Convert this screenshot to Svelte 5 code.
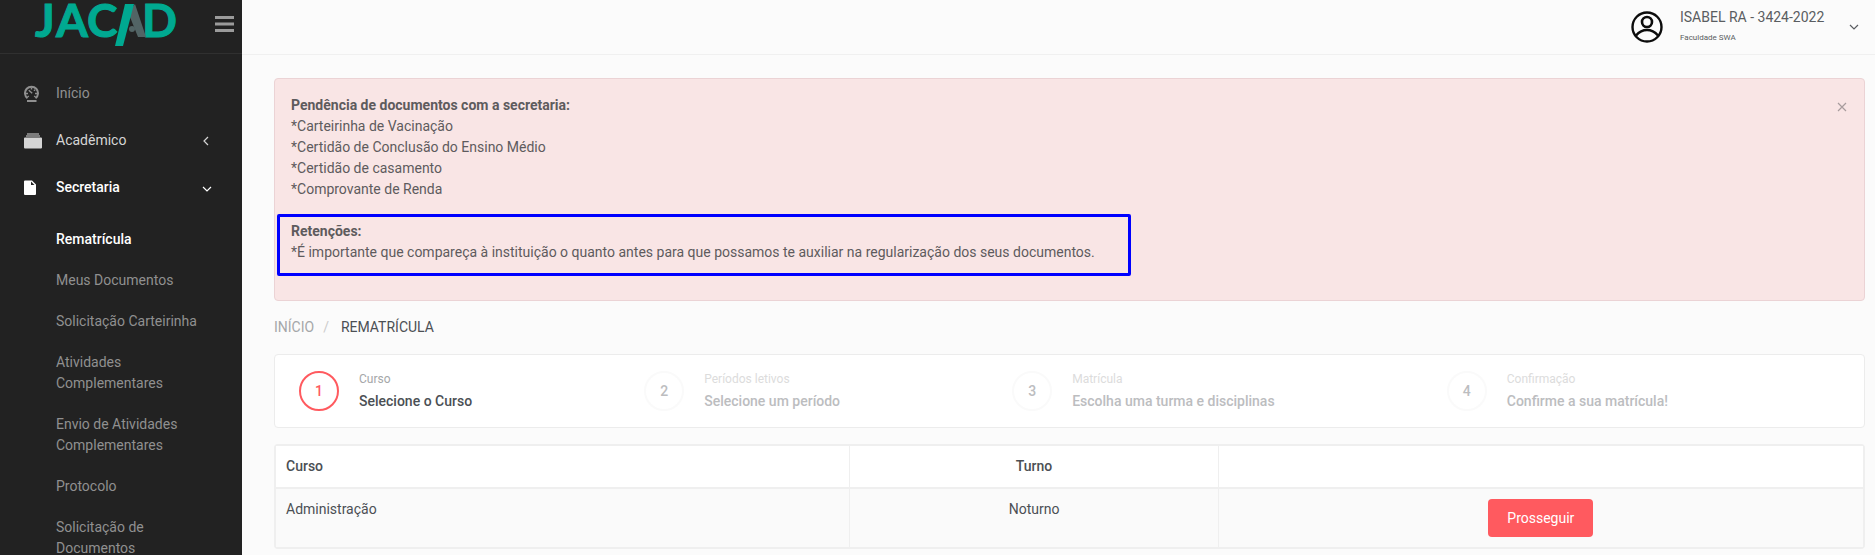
<script>
	const submenu = [
		{ label: "Rematrícula", active: true },
		{ label: "Meus Documentos" },
		{ label: "Solicitação Carteirinha" },
		{ label: "Atividades Complementares" },
		{ label: "Envio de Atividades Complementares" },
		{ label: "Protocolo" },
		{ label: "Solicitação de Documentos" },
	];

	const pendingDocs = [
		"Carteirinha de Vacinação",
		"Certidão de Conclusão do Ensino Médio",
		"Certidão de casamento",
		"Comprovante de Renda",
	];

	const steps = [
		{ title: "Curso", text: "Selecione o Curso" },
		{ title: "Períodos letivos", text: "Selecione um período" },
		{ title: "Matrícula", text: "Escolha uma turma e disciplinas" },
		{ title: "Confirmação", text: "Confirme a sua matrícula!" },
	];

	const courses = [{ name: "Administração", shift: "Noturno" }];

	let currentStep = $state(0);
	let showAlert = $state(true);
	let secretariaOpen = $state(true);

	function nextStep() {
		if (currentStep < steps.length - 1) {
			currentStep += 1;
		}
	}
</script>

<div class="layout">
	<aside class="sidebar">
		<div class="brand">
			<svg class="logo" viewBox="0 0 144 48" role="img" aria-label="JACAD">
				<g class="logo-text">
					<text x="1" y="37">J</text>
					<text x="22" y="37">A</text>
					<text x="53" y="37">C</text>
					<text x="108" y="37">D</text>
				</g>
				<polygon class="logo-leg" points="97,9 101,4 112,37 104,37 96,17" />
				<polygon class="logo-slash" points="91,4 100,4 89,46 81,46" />
				<circle class="logo-leg" cx="98" cy="29" r="3" />
			</svg>
			<button type="button" class="toggle" aria-label="Menu">
				<svg width="20" height="18" viewBox="0 0 20 18">
					<path d="M0 2.500h19M0 9h19M0 15.500h19" stroke="currentColor" stroke-width="3" />
				</svg>
			</button>
		</div>

		<nav class="menu">
			<a href="#inicio" class="menu-item">
				<svg class="menu-icon" viewBox="0 0 18 18">
					<path
						d="M3.500 13.300A6.500 6.500 0 1 1 11.500 13.300"
						fill="none"
						stroke="currentColor"
						stroke-width="2"
					/>
					<path d="M3 15h9.500v2H3z" fill="currentColor" />
					<path
						d="M4.800 5.300l3.400 2.900M7.500 2.500v2M2 8.500h2M11 8.500h2M11 4.800l-1 1M3.500 12l1.300-1M11.500 12l-1.300-1"
						fill="none"
						stroke="currentColor"
						stroke-width="1.500"
					/>
				</svg>
				<span class="menu-label">Início</span>
			</a>
			<a href="#academico" class="menu-item bright">
				<svg class="menu-icon" viewBox="0 0 18 18">
					<path
						d="M3 1.500h12v1H3zM2 3.500h14v1H2zM1 5.500h16a1 1 0 0 1 1 1v9a1 1 0 0 1-1 1H1a1 1 0 0 1-1-1v-9a1 1 0 0 1 1-1z"
						fill="currentColor"
					/>
				</svg>
				<span class="menu-label">Acadêmico</span>
				<svg class="arrow" viewBox="0 0 10 10">
					<path d="M6 1L2 5l4 4" fill="none" stroke="currentColor" stroke-width="1.200" />
				</svg>
			</a>
			<button
				type="button"
				class="menu-item active"
				aria-expanded={secretariaOpen}
				onclick={() => (secretariaOpen = !secretariaOpen)}
			>
				<svg class="menu-icon" viewBox="0 0 18 18">
					<path
						fill-rule="evenodd"
						d="M1 1.500h7l4 4V15a1 1 0 0 1-1 1H1a1 1 0 0 1-1-1V2.500a1 1 0 0 1 1-1zM7 2.500V6h3.500z"
						fill="currentColor"
					/>
				</svg>
				<span class="menu-label">Secretaria</span>
				<svg class="arrow" viewBox="0 0 10 10">
					<path d="M1 4l4 4 4-4" fill="none" stroke="currentColor" stroke-width="1.200" />
				</svg>
			</button>
			{#if secretariaOpen}
				<div class="submenu">
					{#each submenu as item}
						<a href="#secretaria" class="submenu-item" class:active={item.active}>{item.label}</a>
					{/each}
				</div>
			{/if}
		</nav>
	</aside>

	<div class="content">
		<header class="topbar">
			<button type="button" class="user">
				<svg class="avatar" viewBox="0 0 32 32">
					<g fill="none" stroke="#0c0c0c">
						<circle cx="16" cy="16" r="14.500" stroke-width="2.400" />
						<circle cx="16" cy="11" r="5" stroke-width="2.600" />
						<path d="M5 24.500C8.500 20.500 12 19 16 19s7.500 1.500 11 5.500" stroke-width="2.600" />
					</g>
				</svg>
				<span class="user-info">
					<span class="user-name">ISABEL RA - 3424-2022</span>
					<span class="user-school">Faculdade SWA</span>
				</span>
				<svg class="arrow" viewBox="0 0 10 10">
					<path d="M1 3l4 4 4-4" fill="none" stroke="currentColor" stroke-width="1.200" />
				</svg>
			</button>
		</header>

		<main class="page">
			{#if showAlert}
				<div class="alert" role="alert">
					<div class="alert-body">
						<div class="alert-group">
							<strong>Pendência de documentos com a secretaria:</strong>
							{#each pendingDocs as doc}
								<div>*{doc}</div>
							{/each}
						</div>
						<div class="alert-group highlight">
							<strong>Retenções:</strong>
							<div>
								*É importante que compareça à instituição o quanto antes para que possamos te auxiliar
								na regularização dos seus documentos.
							</div>
						</div>
					</div>
					<button
						type="button"
						class="close"
						aria-label="Fechar"
						onclick={() => (showAlert = false)}
					>
						<svg width="12" height="12" viewBox="0 0 12 12">
							<path d="M2 2l8 8M10 2l-8 8" stroke="currentColor" stroke-width="1.200" />
						</svg>
					</button>
				</div>
			{/if}

			<nav class="breadcrumb" aria-label="breadcrumb">
				<a href="#inicio">INÍCIO</a>
				<span class="separator">/</span>
				<span>REMATRÍCULA</span>
			</nav>

			<ol class="steps">
				{#each steps as step, i}
					<li class="step" class:current={i === currentStep}>
						<span class="step-number">{i + 1}</span>
						<span class="step-info">
							<span class="step-title">{step.title}</span>
							<span class="step-text">{step.text}</span>
						</span>
					</li>
				{/each}
			</ol>

			<div class="table-box">
				<table>
					<thead>
						<tr>
							<th class="col-course">Curso</th>
							<th class="col-shift">Turno</th>
							<th class="col-action"></th>
						</tr>
					</thead>
					<tbody>
						{#each courses as course}
							<tr>
								<td class="col-course">{course.name}</td>
								<td class="col-shift">{course.shift}</td>
								<td class="col-action">
									<button type="button" class="btn" onclick={nextStep}>Prosseguir</button>
								</td>
							</tr>
						{/each}
					</tbody>
				</table>
			</div>
		</main>
	</div>
</div>

<style>
	:global(body) {
		background: #fbfbfb;
	}

	.layout,
	.layout * {
		box-sizing: border-box;
	}

	.layout {
		display: flex;
		height: 100vh;
		overflow: hidden;
		font-family: Roboto, "Liberation Sans", sans-serif;
		font-size: 14px;
		line-height: 21px;
		color: #4b4f54;
	}

	button {
		font: inherit;
		color: inherit;
		border: none;
		background: none;
		padding: 0;
		cursor: pointer;
	}

	a {
		color: inherit;
		text-decoration: none;
	}

	.sidebar {
		flex: 0 0 242px;
		background: #222;
		color: #909090;
		overflow: hidden;
	}

	.brand {
		display: flex;
		align-items: flex-start;
		justify-content: space-between;
		height: 54px;
		padding: 0 7px 0 34px;
		border-bottom: 1px solid #303030;
	}

	.logo {
		width: 144px;
		height: 48px;
		overflow: visible;
	}

	.logo-text {
		font-family: Lato, sans-serif;
		font-size: 46px;
		font-weight: 700;
		fill: #00a991;
		stroke: #00a991;
		stroke-width: 1px;
	}

	.logo-slash {
		fill: #00a991;
	}

	.logo-leg {
		fill: #526465;
	}

	.toggle {
		height: 48px;
		color: #9b9b9b;
	}

	.toggle svg {
		display: block;
	}

	.menu {
		padding-top: 16px;
	}

	.menu-item {
		display: flex;
		align-items: center;
		width: 100%;
		padding: 13px 30px 13px 24px;
		text-align: left;
	}

	.menu-icon {
		width: 18px;
		height: 18px;
		margin-right: 14px;
	}

	.menu-label {
		flex: 1;
	}

	.bright {
		color: #d5d5d5;
	}

	.active {
		color: #fff;
		font-weight: 500;
	}

	.arrow {
		width: 10px;
		height: 10px;
	}

	.submenu {
		padding-top: 8px;
	}

	.submenu-item {
		display: block;
		padding: 10px 32px 10px 56px;
	}

	.content {
		flex: 1;
		min-width: 0;
	}

	.topbar {
		display: flex;
		justify-content: flex-end;
		height: 55px;
		padding: 0 16px;
		border-bottom: 1px solid #f0f0f0;
	}

	.user {
		display: flex;
		align-items: center;
		text-align: left;
		color: #5a5d61;
	}

	.avatar {
		width: 32px;
		height: 32px;
		margin-right: 17px;
	}

	.user-info {
		display: flex;
		flex-direction: column;
		min-width: 148px;
		margin-right: 21px;
	}

	.user-school {
		font-size: 8px;
		line-height: 20px;
	}

	.page {
		padding: 23px 10px 0 32px;
	}

	.alert {
		display: flex;
		align-items: flex-start;
		padding: 16px;
		background: #f9e5e5;
		border: 1px solid #ebd3d5;
		border-radius: 4px;
		color: #5e5b5d;
	}

	.alert-body {
		flex: 1;
	}

	.alert-group {
		width: fit-content;
		margin-bottom: 21px;
	}

	.alert strong {
		display: block;
		font-weight: 700;
	}

	.highlight {
		position: relative;
	}

	/* frame drawn around the retention notice */
	.highlight::after {
		content: "";
		position: absolute;
		inset: -7px -36px -13px -14px;
		border: 3px solid #00f;
		border-radius: 2px;
		pointer-events: none;
	}

	.close {
		display: flex;
		align-items: center;
		height: 24px;
		color: #a89c9d;
	}

	.breadcrumb {
		display: flex;
		padding: 16px 0;
	}

	.breadcrumb a {
		color: #a5a7a9;
	}

	.separator {
		margin: 0 12px 0 9px;
		color: #ccc;
	}

	.steps {
		display: flex;
		list-style: none;
		margin: 0 0 16px;
		padding: 16px 24px;
		background: #fff;
		border: 1px solid #ececec;
		border-radius: 4px;
	}

	.step {
		display: flex;
		flex: 1 1 auto;
		align-items: center;
		gap: 20px;
		color: #bcbdbf;
	}

	.step-number {
		display: flex;
		align-items: center;
		justify-content: center;
		width: 40px;
		height: 40px;
		border: 2px solid #fafafa;
		border-radius: 50%;
		font-weight: 500;
	}

	.step-info {
		display: flex;
		flex-direction: column;
		gap: 4px;
	}

	.step-title {
		font-size: 12px;
		line-height: 16px;
		color: #dcdcdc;
	}

	.step-text {
		line-height: 20px;
		font-weight: 500;
	}

	.current {
		color: #4b4f54;
	}

	.current .step-number {
		color: #ff5a5f;
		border-color: #ff5a5f;
	}

	.current .step-title {
		color: #a5a7a9;
	}

	.table-box {
		border: 2px solid #efefef;
		border-radius: 4px;
	}

	table {
		width: 100%;
		border-collapse: separate;
		border-spacing: 0;
		table-layout: fixed;
	}

	th,
	td {
		padding: 10px;
		vertical-align: top;
		text-align: center;
		border-right: 1px solid #efefef;
	}

	th {
		font-weight: 500;
		background: #fff;
		border-bottom: 2px solid #efefef;
	}

	td {
		background: #fafafa;
	}

	th:last-child,
	td:last-child {
		border-right: none;
	}

	.col-course {
		width: 36.2%;
		text-align: left;
	}

	.col-shift {
		width: 23.2%;
	}

	.btn {
		display: block;
		margin: 0 auto;
		height: 38px;
		padding: 0 19px;
		background: #ff5a5f;
		border-radius: 4px;
		color: #fff;
	}
</style>
